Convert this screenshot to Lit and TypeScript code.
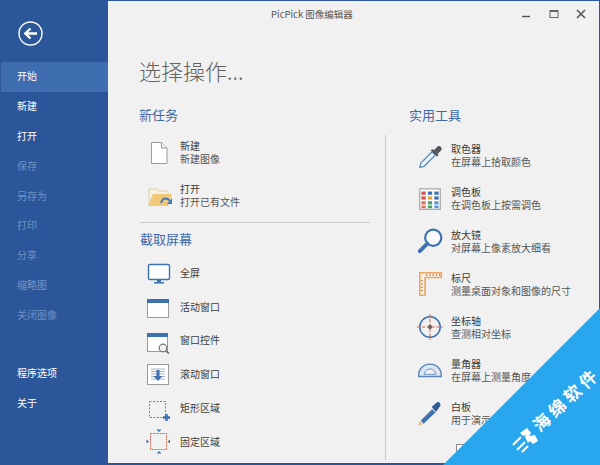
import { LitElement, html, css, svg } from "lit";
import { customElement } from "lit/decorators.js";

const icons: Record<string, unknown> = {
  file: svg`<path d="M5.500 3.500h10l5.500 5.500v15.500H5.500z" fill="#fff" stroke="#9a9a9a"/><path d="M15.500 3.500V9H21" fill="#f1f1f1" stroke="#9a9a9a"/>`,
  folder: svg`<path d="M3 7h8l2 2h9v13H3z" fill="#f7f1e0" stroke="#e0cfa4"/><path d="M2 24l5-12h19l-4 12z" fill="#efc878"/><path d="M15 21c1-5 6-6 9-2" fill="none" stroke="#3f78b8" stroke-width="1.800"/><path d="M26 16v6h-5z" fill="#3f78b8"/>`,
  monitor: svg`<rect x="2.500" y="4.500" width="21" height="15" rx="1.500" fill="#fff" stroke="#3e71b0" stroke-width="1.400"/><path d="M11 20h4v2h3v1.500H8V22h3z" fill="#3e71b0"/>`,
  win: svg`<rect x="1.500" y="5.500" width="21" height="18" fill="#fff" stroke="#9a9a9a"/><rect x="1" y="5" width="22" height="4" fill="#3e71b0"/>`,
  ctrl: svg`<rect x="1.500" y="6.500" width="20" height="18" fill="#fff" stroke="#9a9a9a"/><rect x="1" y="6" width="21" height="4" fill="#3e71b0"/><circle cx="17" cy="21" r="3.800" fill="#f1f1f1" stroke="#777" stroke-width="1.200"/><path d="M20 24l3 2.500" stroke="#777" stroke-width="1.800"/>`,
  scroll: svg`<rect x="1.500" y="3.500" width="21" height="20" fill="#fff" stroke="#9a9a9a"/><path d="M5 8h14M5 10.500h14M5 13h14M5 15.500h14M5 18h14" stroke="#aab4c0"/><path d="M10.500 9h3v6h3L12 20l-4.500-5h3z" fill="#3e71b0"/>`,
  rect: svg`<rect x="3.500" y="6.500" width="16" height="16" fill="none" stroke="#808080" stroke-dasharray="2 1.500"/><path d="M19.300 19h2.400v2.300H24v2.400h-2.300V26h-2.400v-2.300H17v-2.400h2.300z" fill="#3e71b0"/>`,
  fixed: svg`<rect x="4.500" y="5.500" width="16" height="16" fill="none" stroke="#d9634a" stroke-dasharray="2 1"/><path d="M10.500 1.500h5l-2.500 2.500zM10.500 25.500h5L13 23zM.5 11.500v4l2.500-2zM21.500 13.500l2.500-2v4z" fill="#3e71b0"/>`,
  picker: svg`<path d="M3.500 24.500l1-4L15 10l3 3L7.500 23.500z" fill="#eef4fa" stroke="#5d8dc0" stroke-width="1.200"/><path d="M13.500 8.500l6 6 1.500-1.500-1-1 3.500-3.500c1.500-2-1.500-5-3.500-3.500L16.500 8.500l-1-1z" fill="#56585c"/>`,
  palette: svg`<rect x="3.500" y="4.500" width="19" height="19" fill="#fff" stroke="#9a9a9a"/>
    <g><rect x="5" y="7" width="4" height="3" fill="#d9534a"/><rect x="11" y="7" width="4" height="3" fill="#3e71b0"/><rect x="17" y="7" width="4" height="3" fill="#3e71b0"/>
    <rect x="5" y="11.500" width="4" height="3" fill="#d9534a"/><rect x="11" y="11.500" width="4" height="3" fill="#e8a33c"/><rect x="17" y="11.500" width="4" height="3" fill="#3e71b0"/>
    <rect x="5" y="16" width="4" height="3" fill="#e0705a"/><rect x="11" y="16" width="4" height="3" fill="#4ba06a"/><rect x="17" y="16" width="4" height="3" fill="#5a9ad0"/>
    <rect x="5" y="20" width="4" height="2.500" fill="#e0705a"/><rect x="11" y="20" width="4" height="2.500" fill="#4ba06a"/><rect x="17" y="20" width="4" height="2.500" fill="#5a9ad0"/></g>`,
  zoom: svg`<circle cx="16" cy="10" r="7.500" fill="#f8fafc" stroke="#3e71b0" stroke-width="2"/><path d="M10.500 15.500L3.500 22.500" stroke="#3e71b0" stroke-width="3.600" stroke-linecap="round"/>`,
  ruler: svg`<path d="M3.500 2.500h20v4.500H8.500v16.500h-5z" fill="#fbeedd" stroke="#eba765" stroke-width="1.500"/><path d="M10 3.500v2M13 3.500v2M16 3.500v2M19 3.500v2M22 3.500v2M4.500 10h2M4.500 13h2M4.500 16h2M4.500 19h2" stroke="#a08a70"/>`,
  axis: svg`<circle cx="13" cy="13" r="9.500" fill="none" stroke="#3e71b0" stroke-width="1.400"/><path d="M13 1v24M1 13h24" stroke="#d9634a" stroke-dasharray="3 1.500"/><circle cx="13" cy="13" r="2" fill="#666"/>`,
  protractor: svg`<path d="M2.500 19v-1C2.500 12 7 7.500 13 7.500S23.500 12 23.500 18v1z" fill="#dbe6f2" stroke="#5d86b8" stroke-width="1.300"/><path d="M7.500 17c.5-3 3-5 5.500-5s5 2 5.500 5z" fill="#f1f1f1" stroke="#5d86b8" stroke-width=".8"/>`,
  pen: svg`<path d="M2 25l1.500-4.500 3 3z" fill="#e8c48c"/><path d="M4.500 20L15 9.500l3 3L7 23z" fill="#3e71b0"/><path d="M14.500 7.500l5-4.500c1.500-1 4 1.500 3 3.500l-4 5.500z" fill="#2f5c98"/>`,
};

@customElement("app-root")
export class AppRoot extends LitElement {
  static styles = css`
    :host { display: block; width: 600px; height: 465px; overflow: hidden; position: relative; font-family: "Noto Sans CJK SC", "Liberation Sans", sans-serif; background: #f1f1f1; }
    .win { display: flex; width: 600px; height: 465px; box-sizing: border-box; border-top: 1px solid #2b579a; border-bottom: 2px solid #2b579a; border-right: 1px solid #2b579a; }
    .side { width: 108px; flex: none; background: #2b579a; display: flex; flex-direction: column; margin-bottom: -2px; }
    .back { height: 61px; padding: 20px 0 0 18px; box-sizing: border-box; }
    .back svg { display: block; }
    .nav { height: 29.850px; line-height: 28px; font-size: 10px; padding-left: 17px; color: #fff; }
    .nav.on { background: #3e6db0; margin-left: 1px; padding-left: 16px; height: 30px; }
    .nav.off { color: #6f93c6; }
    .spacer { height: 28px; }
    .main { flex: 1; display: flex; flex-direction: column; min-width: 0; }
    .bar { height: 25px; display: flex; align-items: center; font-size: 9.500px; color: #555; flex: none; }
    .title { margin-left: 163px; }
    .ctl { margin-left: auto; display: flex; align-items: center; gap: 13.500px; padding-right: 11px; }
    .ctl svg { display: block; }
    h1 { margin: 0; font-size: 22px; font-weight: 300; color: #636363; line-height: 30px; padding: 29px 0 0 31px; height: 30px; }
    .cols { display: grid; grid-template-columns: 231px 1px 1fr; column-gap: 15px; padding: 20px 0 0 31px; }
    .right { margin-left: 8px; }
    .vline { background: #c9c9c9; margin-top: 30px; height: 325px; }
    h2 { margin: 0; font-size: 13px; font-weight: 400; color: #3f6aa8; line-height: 20px; height: 20px; }
    h2.in { padding-left: 1px; }
    .hline { height: 1px; background: #c9c9c9; margin: 5.500px 0 6px 1px; }
    .group { padding-top: 5.500px; }
    .right .group { padding-top: 8.500px; }
    .list1 { padding-top: 7px; }
    .item { display: flex; align-items: center; height: 43px; padding-left: 7px; }
    .item.one { height: 33.700px; }
    .ico { width: 26px; height: 26px; flex: none; margin-right: 8px; display: block; overflow: visible; }
    .right .ico { width: 28px; height: 28px; margin-right: 7px; }
    .txt { font-size: 10px; line-height: 13.500px; color: #555; white-space: nowrap; }
    .txt b { display: block; font-weight: 400; color: #3c3c3c; }
    .check { width: 10px; height: 10px; border: 1px solid #8a8a8a; background: #fff; margin: 9px 0 0 47px; }
    .ribbon { position: absolute; right: 0; bottom: 0; width: 157px; height: 157px; background: #29a7ee; clip-path: polygon(100% 0, 100% 100%, 0 100%); }
    .mark { position: absolute; left: 564px; top: 400px; transform: translate(-50%, -50%) rotate(-43deg); color: #fff; font-size: 17px; font-weight: 700; display: flex; gap: 4px; white-space: nowrap; line-height: 17px; }
    .logo { position: absolute; left: 510px; top: 410px; display: block; }
  `;

  private row(icon: string, a: string, b?: string) {
    return html`<div class="item ${b ? "" : "one"}">
      <svg class="ico" viewBox="0 0 26 26">${icons[icon]}</svg>
      <div class="txt"><b>${a}</b>${b ?? ""}</div>
    </div>`;
  }

  render() {
    const top = ["保存", "另存为", "打印", "分享", "缩略图", "关闭图像"];
    return html`
      <div class="win">
        <div class="side">
          <div class="back">
            <svg width="25" height="25" viewBox="0 0 25 25">
              <circle cx="12.500" cy="12.500" r="11.500" fill="none" stroke="#fff" stroke-width="1.400"/>
              <path d="M19 12.500H8M12.500 7.500l-5.200 5 5.200 5" fill="none" stroke="#fff" stroke-width="2.400"/>
            </svg>
          </div>
          <div class="nav on">开始</div>
          <div class="nav">新建</div>
          <div class="nav">打开</div>
          ${top.map((t) => html`<div class="nav off">${t}</div>`)}
          <div class="spacer"></div>
          <div class="nav">程序选项</div>
          <div class="nav">关于</div>
        </div>
        <div class="main">
          <div class="bar">
            <span class="title">PicPick 图像编辑器</span>
            <div class="ctl">
              <svg width="14" height="14" viewBox="0 0 14 14"><path d="M3 9.500h8" stroke="#555" stroke-width="1.400"/></svg>
              <svg width="14" height="14" viewBox="0 0 14 14"><rect x="3" y="3.500" width="8" height="7" fill="none" stroke="#666"/><path d="M3 4h8" stroke="#666" stroke-width="2"/></svg>
              <svg width="14" height="14" viewBox="0 0 14 14"><path d="M3 3l8 8M11 3l-8 8" stroke="#555" stroke-width="1.600"/></svg>
            </div>
          </div>
          <h1>选择操作...</h1>
          <div class="cols">
            <div class="left">
              <h2>新任务</h2>
              <div class="group">
                ${this.row("file", "新建", "新建图像")}
                ${this.row("folder", "打开", "打开已有文件")}
              </div>
              <div class="hline"></div>
              <h2 class="in">截取屏幕</h2>
              <div class="list1">
                ${this.row("monitor", "全屏")}
                ${this.row("win", "活动窗口")}
                ${this.row("ctrl", "窗口控件")}
                ${this.row("scroll", "滚动窗口")}
                ${this.row("rect", "矩形区域")}
                ${this.row("fixed", "固定区域")}
              </div>
            </div>
            <div class="vline"></div>
            <div class="right">
              <h2>实用工具</h2>
              <div class="group">
                ${this.row("picker", "取色器", "在屏幕上拾取颜色")}
                ${this.row("palette", "调色板", "在调色板上按需调色")}
                ${this.row("zoom", "放大镜", "对屏幕上像素放大细看")}
                ${this.row("ruler", "标尺", "测量桌面对象和图像的尺寸")}
                ${this.row("axis", "坐标轴", "查测相对坐标")}
                ${this.row("protractor", "量角器", "在屏幕上测量角度")}
                ${this.row("pen", "白板", "用于演示或教学")}
              </div>
              <div class="check"></div>
            </div>
          </div>
        </div>
      </div>
      <div class="ribbon"></div>
      <svg class="logo" width="30" height="46" viewBox="0 0 30 46">
        <path d="M10 23l7-5 4 5-2 3 6-1 3 6-5 3-3-3-2 2-3-6 1-2-3 1z" fill="#fff"/>
        <path d="M3 35l8-8M7 40l8-8M12 42l6-6" fill="none" stroke="#fff" stroke-width="2"/>
      </svg>
      <div class="mark"><span>海</span><span>绵</span><span>软</span><span>件</span></div>
    `;
  }
}
